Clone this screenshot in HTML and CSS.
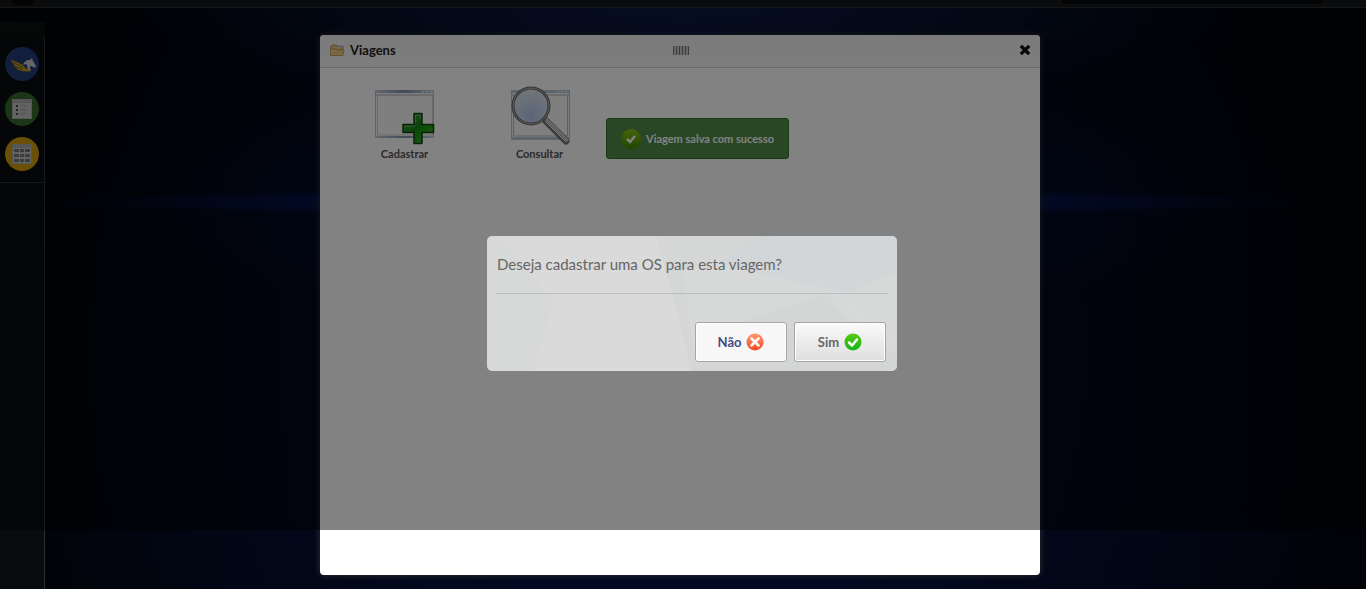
FILE: index.html
```html
<!DOCTYPE html>
<html lang="pt-BR">
<head>
<meta charset="utf-8">
<title>Viagens</title>
<link rel="stylesheet" href="styles.css">
</head>
<body class="desktop">
<header class="topbar"><span class="topbar-logo"></span><span class="topbar-search"></span></header>
<nav class="sidebar" aria-label="Atalhos">
  <div class="sidebar-head"></div>
  <div class="shortcuts">
    <button class="shortcut shortcut-blue" aria-label="Início">
      <svg width="34" height="34" viewBox="0 0 34 34"><path d="M5 12c3 2 8 3 11 5 2 1 4 3 5 5l4-2 1 4c-5 1-11 0-15-2l2-1c-2 0-4-2-5-3h2c-2-1-3-2-3-4z" fill="#c39a20"/><path d="M8 15l10 6M8 18l9 5" stroke="#705b20" fill="none"/><path d="M18 18c1-3 3-5 7-5l2-2 1 3 3 5-1 2-4-2c-2 1-2 3 0 5-3-1-4-4-4-6-1-1-2-1-4 0z" fill="#c4c6ca"/></svg>
    </button>
    <button class="shortcut shortcut-green" aria-label="Lista">
      <svg width="34" height="34" viewBox="0 0 34 34"><path fill="#aaa" d="M7 7h20v20H7z"/><path fill="#c4c4c4" d="M8 11h18v15H8z"/><path fill="#c6c6c6" d="M8 8h1v1H8zm3 0h1v1h-1zm3 0h1v1h-1z"/><path fill="#444" d="M11 13h2v2h-2zm0 4h2v2h-2zm0 4h2v2h-2z"/><path d="M15 13h6M15 14h8M15 17h6M15 18h8M15 21h6M15 22h8" stroke="#aaa"/></svg>
    </button>
    <button class="shortcut shortcut-yellow" aria-label="Tabela">
      <svg width="34" height="34" viewBox="0 0 34 34"><path fill="#a8a8a8" d="M7 7h20v20H7z"/><path fill="#c4c4c4" d="M8 11h18v15H8z"/><path fill="#c6c6c6" d="M8 8h1v1H8zm3 0h1v1h-1zm3 0h1v1h-1z"/><path fill="#777" d="M9 12h5v3H9zm6 0h4v3h-4zm5 0h5v3h-5zM9 17h5v3H9zm6 0h4v3h-4zm5 0h5v3h-5zM9 22h5v3H9zm6 0h4v3h-4zm5 0h5v3h-5z"/></svg>
    </button>
  </div>
</nav>

<section class="window" aria-labelledby="window-title">
  <header class="window-bar">
    <div class="window-heading">
      <svg width="15" height="13" viewBox="0 0 15 13"><path d="M1 2l1-1h4l1 1h6v4H1z" fill="#e6c67c" stroke="#b8945a"/><path d="M8 1h4v3H8z" fill="#b5d1cc"/><path d="M.5 11.500V5H5l2 1h7l-1 5.500z" fill="#f2d28c" stroke="#c29d5d"/><path d="M2 9h11" stroke="#e4bb68"/></svg>
      <h1 class="window-title" id="window-title">Viagens</h1>
    </div>
    <span class="grip"></span>
    <button class="close" aria-label="Fechar"><svg width="12" height="12" viewBox="0 0 12 12"><path d="M3 3l6 6M9 3l-6 6" stroke="#111" stroke-width="3.300" stroke-linecap="square"/></svg></button>
  </header>
  <div class="actions">
    <a class="action" href="#cadastrar">
      <svg width="60" height="60" viewBox="0 0 60 60">
        <defs><linearGradient id="bar"><stop stop-color="#c0cbd8"/><stop offset=".5" stop-color="#7f93b0"/><stop offset="1" stop-color="#c2cfdf"/></linearGradient><linearGradient id="plus" x1="0" y1="0" x2="1" y2="1"><stop stop-color="#55b455"/><stop offset=".45" stop-color="#168017"/><stop offset=".6" stop-color="#17a010"/><stop offset="1" stop-color="#54a954"/></linearGradient></defs>
        <path d="M.5 4.500h58v47H.5z" fill="#fafafa" stroke="#b8bec6"/><path d="M0 4h59v3H0zM0 50h59v2H0z" fill="url(#bar)"/><path d="M1 8h57v2H1z" fill="#d0d0d0"/><path d="M47 5h2v1h-2zm4 0h2v1h-2zm4 0h2v1h-2z" fill="#e5edf8"/><path d="M2.500 10v39h55V10" fill="none" stroke="#d0d0d0"/>
        <path d="M39 27.500h8v11h11.500v8H47v11h-8v-11H28v-8h11z" fill="url(#plus)" stroke="#104610" stroke-width="1.500" stroke-linejoin="round"/><path d="M40.500 37v-8h5v4M30 40h10" fill="none" stroke="#94d091" opacity=".6"/>
      </svg>
      <span>Cadastrar</span>
    </a>
    <a class="action" href="#consultar">
      <svg width="60" height="60" viewBox="0 0 60 60">
        <defs><radialGradient id="lens" cx=".5" cy=".75" r=".7"><stop stop-color="#b4c2ec"/><stop offset=".6" stop-color="#cfdcee"/><stop offset="1" stop-color="#dce5ef"/></radialGradient></defs>
        <path d="M1.500 4.500h58v49h-58z" fill="#fafafa" stroke="#b8bec6"/><path d="M1 4h59v3H1zM1 51h59v3H1z" fill="#b6c4d3"/><path d="M2 8h57v2H2z" fill="#d0d0d0"/><path d="M47 5h2v1h-2zm4 0h2v1h-2zm4 0h2v1h-2z" fill="#e5edf8"/><path d="M3.500 10v40h54V10" fill="none" stroke="#bbb"/>
        <path d="M36 35l20 20" stroke="#777" stroke-width="7" stroke-linecap="round"/><path d="M36 33l22 22" stroke="#ccc" stroke-width="3"/><path d="M35 35l21 21" stroke="#eee"/>
        <circle cx="21" cy="20" r="18" fill="url(#lens)" stroke="#666" stroke-width="3"/><circle cx="21" cy="20" r="18" fill="none" stroke="#bbb"/>
      </svg>
      <span>Consultar</span>
    </a>
  </div>
</section>

<div class="toast" role="status">
  <svg width="20" height="20" viewBox="0 0 20 20"><defs><linearGradient id="ok" x2="0" y2="1"><stop stop-color="#8fc414"/><stop offset="1" stop-color="#3a8b00"/></linearGradient></defs><circle cx="10" cy="10" r="10" fill="url(#ok)"/><path d="M6 10l3 3 5-6" fill="none" stroke="#fff" stroke-width="2.500"/></svg>
  <span>Viagem salva com sucesso</span>
</div>

<div class="shade"></div>

<div class="dialog" role="dialog" aria-modal="true" aria-labelledby="question">
  <svg class="dialog-texture" viewBox="0 0 410 135" preserveAspectRatio="none"><path d="M8 0L68 65 45 135h160L170 0z" fill="#dadada" opacity=".6"/><path d="M170 0h120l-95 35 15 100h-5z" fill="#d1d5d3" opacity=".5"/><path d="M270 0h140v35l-50 22-130-30z" fill="#d1d3d8" opacity=".6"/><path d="M240 90l100-32 70 52v25H205z" fill="#d1d4d3" opacity=".5"/><path d="M340 65h22l48 38v17z" fill="#dadcdb" opacity=".5"/></svg>
  <p class="question" id="question">Deseja cadastrar uma OS para esta viagem?</p>
  <div class="buttons">
    <button class="btn btn-no">Não <svg width="18" height="18" viewBox="0 0 18 18"><defs><linearGradient id="no" x2="0" y2="1"><stop stop-color="#ff9971"/><stop offset="1" stop-color="#f64820"/></linearGradient></defs><circle cx="9" cy="9" r="8.500" fill="url(#no)"/><path d="M5.500 5.500l7 7M12.500 5.500l-7 7" stroke="#fff" stroke-width="2.500" stroke-linecap="round"/></svg></button>
    <button class="btn">Sim <svg width="18" height="18" viewBox="0 0 18 18"><defs><linearGradient id="yes" x2="0" y2="1"><stop stop-color="#5acb12"/><stop offset="1" stop-color="#10b51b"/></linearGradient></defs><circle cx="9" cy="9" r="8.500" fill="url(#yes)"/><path d="M5 9.500l3 3 5-6" fill="none" stroke="#fff" stroke-width="2.500" stroke-linecap="round" stroke-linejoin="round"/></svg></button>
  </div>
</div>
</body>
</html>
```

FILE: styles.css
```css
* { box-sizing: border-box; }
.desktop {
  margin: 0;
  min-height: 100vh;
  display: flex;
  flex-direction: column;
  position: relative;
  overflow: hidden;
  font-family: Lato, "Open Sans", sans-serif;
  background:
    radial-gradient(ellipse 47% 14px at 50% 202px, rgba(8, 40, 150, .7), transparent),
    radial-gradient(ellipse 40% 130px at 50% 202px, rgba(4, 24, 90, .6), transparent),
    radial-gradient(ellipse 40% 110px at 50% 0, rgba(20, 40, 90, .6), transparent),
    radial-gradient(ellipse 50% 120% at 50% 60%, #020c2c, transparent),
    linear-gradient(90deg, #010308, #02050e 25%, #02050e 75%, #010208);
}
button { font-family: inherit; cursor: pointer; }
svg { display: block; flex: none; }
.topbar {
  height: 8px;
  display: flex;
  justify-content: space-between;
  align-items: flex-start;
  padding: 0 43px 0 11px;
  background: #16191b;
  border-bottom: 1px solid #2e2e2e;
}
.topbar-logo { width: 24px; height: 5px; background: #08090a; border-radius: 0 0 12px 12px; }
.topbar-search { width: 261px; height: 4px; background: #07080a; border-radius: 0 0 4px 4px; }
.sidebar {
  flex: 1;
  width: 45px;
  margin-top: 14px;
  display: flex;
  flex-direction: column;
  background: #080c0e;
}
.sidebar-head { height: 14px; background: #0c0e0e; }
.shortcuts {
  flex: 1;
  padding: 11px 5px;
  display: flex;
  flex-direction: column;
  gap: 11px;
  border-right: 1px solid #2b2d2e;
  background: linear-gradient(#2b2d2e, #2b2d2e) 0 146px / 100% 1px no-repeat;
}
.shortcut { width: 34px; height: 34px; padding: 0; border: 0; border-radius: 50%; }
.shortcut-blue { background: #223d76; }
.shortcut-green { background: #356b2b; }
.shortcut-yellow { background: #cf9d0d; }

.window {
  position: absolute;
  inset: 35px 326px 14px 320px;
  background: #fff;
  border-radius: 4px;
  box-shadow: 0 0 6px #333;
  overflow: hidden;
}
.window-bar {
  height: 33px;
  display: grid;
  grid-template-columns: 1fr auto 1fr;
  align-items: center;
  padding: 0 9px 2px 10px;
  background: linear-gradient(#f0f0f0, #f6f6f6);
  border-bottom: 1px solid #ccc;
}
.window-heading { display: flex; align-items: center; gap: 5px; }
.window-title { margin: 0; font-size: 13px; line-height: 16px; color: #222; }
.grip { width: 16px; height: 9px; background: repeating-linear-gradient(90deg, #777 0 1px, #ccc 1px 3px); }
.close { justify-self: end; padding: 0; border: 0; background: none; }
.actions { display: flex; padding: 18px 17px; }
.action {
  width: 135px;
  display: flex;
  flex-direction: column;
  align-items: center;
  gap: 1px;
  color: #555;
  font-size: 11px;
  line-height: 14px;
  font-weight: bold;
  text-decoration: none;
}
.toast {
  position: absolute;
  top: 118px;
  left: 606px;
  height: 41px;
  display: flex;
  align-items: center;
  gap: 5px;
  padding: 0 14px;
  background: #518c48;
  border: 1px solid #2f7820;
  border-radius: 3px;
  color: #fff;
  font-size: 11px;
  font-weight: bold;
}
.shade { position: absolute; inset: 0 0 10% 0; background: rgba(0, 0, 0, .49); }

.dialog {
  position: absolute;
  top: 236px;
  left: 487px;
  width: 410px;
  padding: 18px 9px 9px;
  background: #d7d9d8;
  border-radius: 5px;
  overflow: hidden;
}
.dialog-texture { position: absolute; inset: 0; width: 100%; height: 100%; }
.question {
  position: relative;
  margin: 0;
  padding: 0 1px 19px;
  border-bottom: 1px solid #bbbfc0;
  color: #666;
  font-size: 15px;
  line-height: 20px;
}
.buttons { position: relative; display: flex; justify-content: flex-end; gap: 7px; padding: 28px 2px 0 0; }
.btn {
  width: 92px;
  height: 40px;
  display: flex;
  align-items: center;
  justify-content: center;
  gap: 5px;
  padding: 0;
  color: #666;
  font-size: 13px;
  font-weight: bold;
  background: linear-gradient(#fafafa, #dedede);
  border: 1px solid #a5a5a5;
  border-radius: 3px;
  box-shadow: inset 0 0 0 1px #fff;
}
.btn-no { color: #424b84; background: #f7f7f7; }
```
